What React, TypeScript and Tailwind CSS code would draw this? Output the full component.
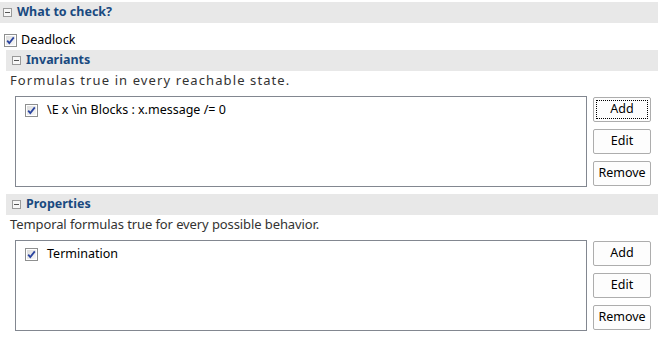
const font = { fontFamily: '"Noto Sans", "Open Sans", sans-serif' };

const Toggle = () => (
  <svg width="9" height="9" viewBox="0 0 9 9" className="shrink-0">
    <rect x="0.5" y="0.5" width="8" height="8" fill="#f7f7f7" stroke="#9a9a9a" />
    <line x1="2" y1="4.5" x2="7" y2="4.5" stroke="#555" strokeWidth="1" />
  </svg>
);

const Check = () => (
  <svg width="13" height="13" viewBox="0 0 13 13" className="shrink-0">
    <defs>
      <linearGradient id="cbg" x1="0" y1="0" x2="1" y2="1">
        <stop offset="0" stopColor="#dcdcdc" />
        <stop offset="1" stopColor="#f8f8f8" />
      </linearGradient>
    </defs>
    <rect x="0.5" y="0.5" width="12" height="12" fill="#fff" stroke="#8e8f8f" />
    <rect x="2" y="2" width="9" height="9" fill="url(#cbg)" />
    <path d="M3.2 6.6 L5.3 9 L9.8 3.4" fill="none" stroke="#2a44a0" strokeWidth="1.8" />
  </svg>
);

const Header = ({ title, indent }: { title: string; indent: boolean }) => (
  <div
    className={`flex items-center h-[21px] bg-[#e8e8e8] ${indent ? "ml-[6px] pl-[6px]" : "pl-[3px]"}`}
  >
    <Toggle />
    <span className="ml-[5px] text-[12.5px] font-bold text-[#1a4a80]">{title}</span>
  </div>
);

const Btn = ({ label, focused }: { label: string; focused?: boolean }) => (
  <button className="h-[25px] w-[58px] border border-[#adadad] bg-[#fdfdfd] rounded-[2px] text-[12.5px] text-black flex items-center justify-center p-[2px]">
    <span
      className={`w-full h-full flex items-center justify-center ${focused ? "border border-dotted border-black" : ""}`}
    >
      {label}
    </span>
  </button>
);

const Section = ({
  title,
  desc,
  descClass,
  item,
  focused,
}: {
  title: string;
  desc: string;
  descClass: string;
  item: string;
  focused?: boolean;
}) => (
  <div>
    <Header title={title} indent />
    <div className={`pl-[10px] h-[17px] text-[13px] text-[#333] leading-[19px] ${descClass}`}>{desc}</div>
    <div className="flex mt-[8px] pl-[15px]">
      <div className="w-[572px] h-[91px] border border-[#828790] bg-white">
        <div className="flex items-center pl-[9px] pt-[4px]">
          <Check />
          <span className="ml-[9px] text-[12.5px] text-black">{item}</span>
        </div>
      </div>
      <div className="ml-[6px] pt-[1px] flex flex-col gap-[7px]">
        <Btn label="Add" focused={focused} />
        <Btn label="Edit" />
        <Btn label="Remove" />
      </div>
    </div>
  </div>
);

const App = () => {
  return (
    <div className="w-[658px] h-[349px] bg-white overflow-hidden pt-[2px]" style={font}>
      <Header title="What to check?" indent={false} />
      <div className="flex items-center h-[27px] pl-[4px] pt-[8px]">
        <Check />
        <span className="ml-[4px] text-[12.5px] text-black">Deadlock</span>
      </div>
      <Section
        title="Invariants"
        desc="Formulas true in every reachable state."
        descClass="tracking-[1.1px]"
        item="\E x \in Blocks : x.message /= 0"
        focused
      />
      <div className="mt-[7px]">
        <Section
          title="Properties"
          desc="Temporal formulas true for every possible behavior."
          descClass="tracking-[-0.1px]"
          item="Termination"
        />
      </div>
    </div>
  );
};

export default App;
